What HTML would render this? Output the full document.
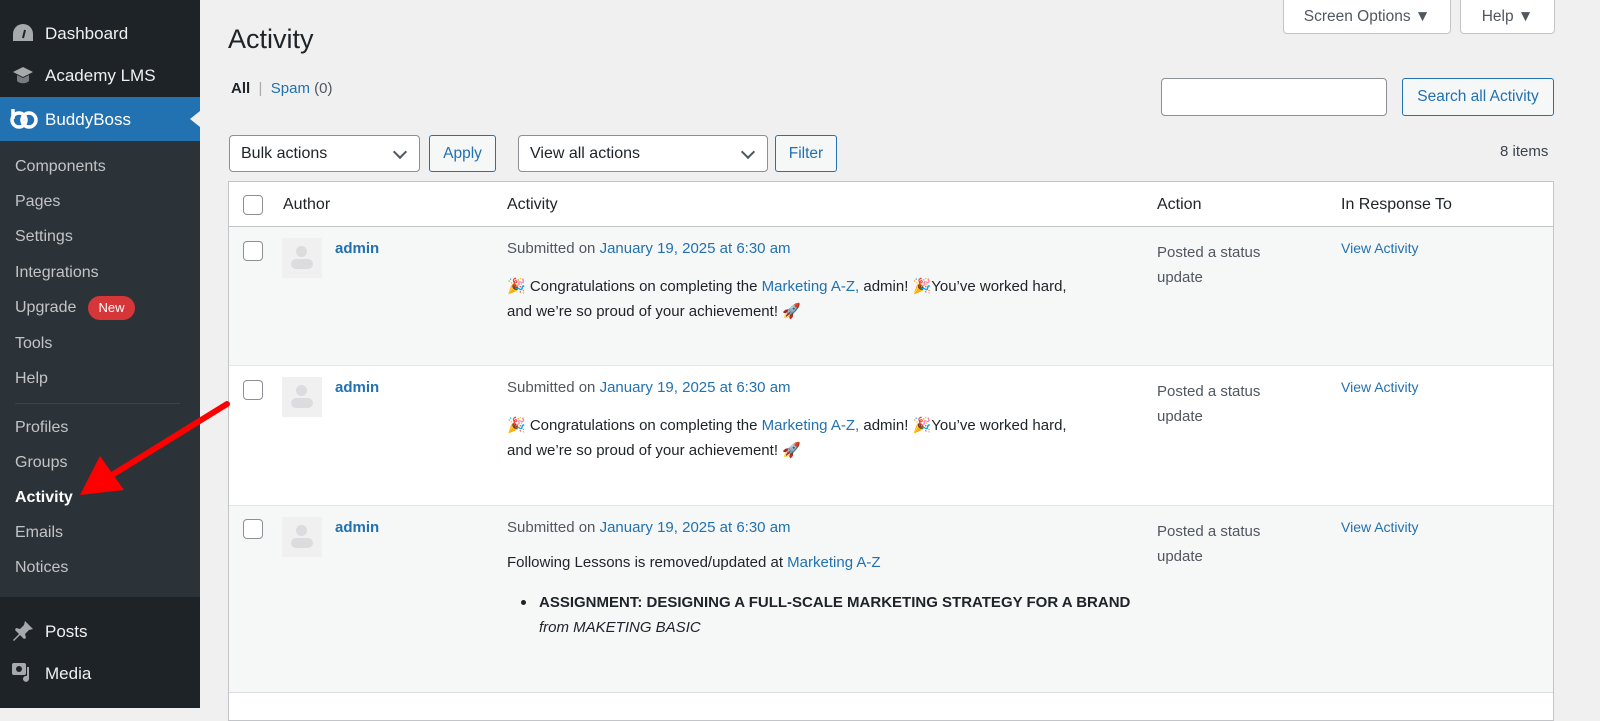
<!DOCTYPE html>
<html><head><meta charset="utf-8"><style>
*{box-sizing:border-box;margin:0;padding:0}
body{width:1600px;height:708px;overflow:hidden;background:#f0f0f1;font-family:"Liberation Sans",sans-serif;color:#1d2327;position:relative;font-size:15px}
.a{position:absolute;white-space:nowrap}
#sb{position:absolute;left:0;top:0;width:200px;height:708px;background:#1d2327}
#sub{position:absolute;left:0;top:140px;width:200px;height:457px;background:#2c3338}
.top{color:#f0f0f1;font-size:17px;left:45px}
.si{color:#c3c4c7;font-size:16px;left:15px}
.lk{color:#2271b1}
.btn{position:absolute;border:1px solid #2271b1;border-radius:3px;color:#2271b1;background:#f6f7f7;text-align:center;font-size:15.5px}
.sel{position:absolute;border:1px solid #8c8f94;border-radius:4px;background:#fff;font-size:16px;padding-left:11px}
.sel:after{content:"";position:absolute;right:14px;top:11px;width:8px;height:8px;border-right:2px solid #50575e;border-bottom:2px solid #50575e;transform:rotate(45deg)}
.cb{position:absolute;left:243px;width:20px;height:20px;border:1px solid #8c8f94;border-radius:4px;background:#fff}
.av{position:absolute;left:282px;width:40px;height:40px;background:#f0f0f1}
.av:before{content:"";position:absolute;left:14px;top:8px;width:11px;height:11px;border-radius:50%;background:#dcdcde}
.av:after{content:"";position:absolute;left:9px;top:21px;width:22px;height:10px;border-radius:6px;background:#dcdcde}
</style></head><body>
<div id="sb"></div><div id="sub"></div>
<div class="a" style="left:0;top:97px;width:200px;height:44px;background:#2271b1"></div>
<div class="a" style="left:190px;top:111px;width:0;height:0;border-top:8px solid transparent;border-bottom:8px solid transparent;border-right:10px solid #f0f0f1"></div>
<svg class="a" style="left:11px;top:22px" width="24" height="22"><path d="M12 2a10 10 0 0 0-10 10v7h20v-7A10 10 0 0 0 12 2z" fill="#a7aaad"/><path d="M12 16l2-8" stroke="#1d2327" stroke-width="2"/></svg>
<svg class="a" style="left:11px;top:64px" width="24" height="22"><path d="M12 3L2 8l10 5 10-5z" fill="#a7aaad"/><path d="M6 11v6c3 3 9 3 12 0v-6l-6 3z" fill="#787c82"/></svg>
<svg class="a" style="left:10px;top:107px" width="28" height="24"><circle cx="9" cy="13" r="7" fill="none" stroke="#fff" stroke-width="3.5"/><circle cx="19" cy="13" r="7" fill="none" stroke="#fff" stroke-width="3.5"/><path d="M3 2v10" stroke="#fff" stroke-width="3.5"/></svg>
<div class="a top" style="top:24px">Dashboard</div>
<div class="a top" style="top:66px">Academy LMS</div>
<div class="a top" style="top:110px;color:#fff">BuddyBoss</div>
<div class="a si" style="top:158px">Components</div>
<div class="a si" style="top:193px">Pages</div>
<div class="a si" style="top:228px">Settings</div>
<div class="a si" style="top:264px">Integrations</div>
<div class="a si" style="top:299px">Upgrade</div>
<div class="a" style="left:88px;top:296px;width:47px;height:24px;border-radius:12px;background:#d63638;color:#fff;font-size:13px;text-align:center;line-height:24px">New</div>
<div class="a si" style="top:335px">Tools</div>
<div class="a si" style="top:370px">Help</div>
<div class="a" style="left:15px;top:403px;width:165px;height:1px;background:#3c434a"></div>
<div class="a si" style="top:419px">Profiles</div>
<div class="a si" style="top:454px">Groups</div>
<div class="a si" style="top:489px;color:#fff;font-weight:bold">Activity</div>
<div class="a si" style="top:524px">Emails</div>
<div class="a si" style="top:559px">Notices</div>
<svg class="a" style="left:11px;top:619px" width="24" height="24"><path d="M14 2l8 8-4 1-4 4 1 4-2 1-4-4-6 6-1-1 6-6-4-4 1-2 4 1 4-4z" fill="#a7aaad"/></svg>
<svg class="a" style="left:11px;top:661px" width="24" height="24"><rect x="1" y="2" width="14" height="12" rx="2" fill="#a7aaad"/><circle cx="8" cy="8" r="3" fill="#1d2327"/><path d="M18 6v12a3 3 0 1 1-2-3V6z" fill="#a7aaad"/></svg>
<div class="a top" style="top:622px">Posts</div>
<div class="a top" style="top:664px">Media</div>

<div class="a" style="left:228px;top:24px;font-size:27px;color:#1d2327">Activity</div>
<div class="a" style="left:231px;top:80px;font-size:15px"><b>All</b> <span style="color:#a7aaad">&nbsp;|&nbsp;</span> <span class="lk">Spam</span> <span style="color:#50575e">(0)</span></div>
<div class="a" style="left:1283px;top:-4px;width:168px;height:38px;background:#fff;border:1px solid #c3c4c7;border-radius:0 0 4px 4px;color:#50575e;font-size:15.5px;text-align:center;line-height:40px">Screen Options ▼</div>
<div class="a" style="left:1460px;top:-4px;width:95px;height:38px;background:#fff;border:1px solid #c3c4c7;border-radius:0 0 4px 4px;color:#50575e;font-size:15.5px;text-align:center;line-height:40px">Help ▼</div>
<div class="a" style="left:1161px;top:78px;width:226px;height:38px;border:1px solid #8c8f94;border-radius:4px;background:#fff"></div>
<div class="btn" style="left:1402px;top:78px;width:152px;height:38px;line-height:36px">Search all Activity</div>
<div class="sel" style="left:229px;top:135px;width:191px;height:37px;line-height:35px">Bulk actions</div>
<div class="btn" style="left:429px;top:135px;width:67px;height:37px;line-height:35px">Apply</div>
<div class="sel" style="left:518px;top:135px;width:250px;height:37px;line-height:35px">View all actions</div>
<div class="btn" style="left:775px;top:135px;width:62px;height:37px;line-height:35px">Filter</div>
<div class="a" style="left:1500px;top:143px;color:#3c434a">8 items</div>

<div class="a" style="left:228px;top:181px;width:1326px;height:540px;border:1px solid #c3c4c7;background:#fff"></div>
<div class="a" style="left:229px;top:226px;width:1324px;height:1px;background:#c3c4c7"></div>
<div class="a" style="left:229px;top:227px;width:1324px;height:138px;background:#f6f7f7"></div>
<div class="a" style="left:229px;top:365px;width:1324px;height:1px;background:#e5e5e5"></div>
<div class="a" style="left:229px;top:505px;width:1324px;height:1px;background:#e5e5e5"></div>
<div class="a" style="left:229px;top:506px;width:1324px;height:186px;background:#f6f7f7"></div>
<div class="a" style="left:229px;top:692px;width:1324px;height:1px;background:#dcdcde"></div>

<div class="cb" style="top:195px"></div>
<div class="a" style="left:283px;top:196px;font-size:16px">Author</div>
<div class="a" style="left:507px;top:196px;font-size:16px">Activity</div>
<div class="a" style="left:1157px;top:196px;font-size:16px">Action</div>
<div class="a" style="left:1341px;top:196px;font-size:16px">In Response To</div>

<div class="cb" style="top:241px"></div><div class="av" style="top:238px"></div>
<div class="a lk" style="left:335px;top:240px;font-weight:bold">admin</div>
<div class="a" style="left:507px;top:240px;color:#50575e">Submitted on <span class="lk">January 19, 2025 at 6:30 am</span></div>
<div class="a" style="left:507px;top:274px;line-height:25px">🎉 Congratulations on completing the <span class="lk">Marketing A-Z,</span> admin! 🎉You’ve worked hard,<br>and we’re so proud of your achievement! 🚀</div>
<div class="a" style="left:1157px;top:240px;line-height:25px;color:#50575e">Posted a status<br>update</div>
<div class="a lk" style="left:1341px;top:240px;font-size:14px">View Activity</div>

<div class="cb" style="top:380px"></div><div class="av" style="top:377px"></div>
<div class="a lk" style="left:335px;top:379px;font-weight:bold">admin</div>
<div class="a" style="left:507px;top:379px;color:#50575e">Submitted on <span class="lk">January 19, 2025 at 6:30 am</span></div>
<div class="a" style="left:507px;top:413px;line-height:25px">🎉 Congratulations on completing the <span class="lk">Marketing A-Z,</span> admin! 🎉You’ve worked hard,<br>and we’re so proud of your achievement! 🚀</div>
<div class="a" style="left:1157px;top:379px;line-height:25px;color:#50575e">Posted a status<br>update</div>
<div class="a lk" style="left:1341px;top:379px;font-size:14px">View Activity</div>

<div class="cb" style="top:519px"></div><div class="av" style="top:517px"></div>
<div class="a lk" style="left:335px;top:519px;font-weight:bold">admin</div>
<div class="a" style="left:507px;top:519px;color:#50575e">Submitted on <span class="lk">January 19, 2025 at 6:30 am</span></div>
<div class="a" style="left:507px;top:554px">Following Lessons is removed/updated at <span class="lk">Marketing A-Z</span></div>
<div class="a" style="left:521px;top:600px;width:5px;height:5px;border-radius:50%;background:#1d2327"></div>
<div class="a" style="left:539px;top:594px;font-size:15px;font-weight:bold">ASSIGNMENT: DESIGNING A FULL-SCALE MARKETING STRATEGY FOR A BRAND</div>
<div class="a" style="left:539px;top:619px;font-style:italic;font-size:15px">from MAKETING BASIC</div>
<div class="a" style="left:1157px;top:519px;line-height:25px;color:#50575e">Posted a status<br>update</div>
<div class="a lk" style="left:1341px;top:519px;font-size:14px">View Activity</div>

<svg class="a" style="left:0;top:0" width="300" height="708"><line x1="227" y1="404" x2="112" y2="475" stroke="#f00" stroke-width="6" stroke-linecap="round"/><polygon points="80,495 100,456 124,490" fill="#f00"/></svg>
</body></html>
